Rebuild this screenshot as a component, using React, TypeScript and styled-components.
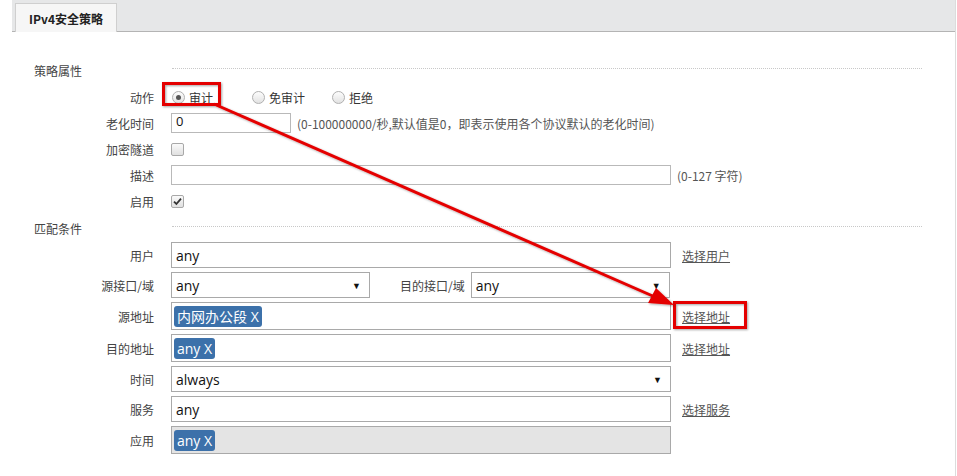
import React from 'react';
import styled, { createGlobalStyle } from 'styled-components';

const GlobalStyle = createGlobalStyle`
  html, body {
    margin: 0;
    padding: 0;
    background: #fff;
  }
  body {
    font-family: "Noto Sans CJK SC", "Liberation Sans", sans-serif;
    font-size: 12px;
    color: #333;
  }
`;

const Page = styled.div`
  position: relative;
  width: 957px;
  height: 476px;
  overflow: hidden;
  background: #fff;
  padding-left: 12px;
  box-sizing: border-box;
`;

const Panel = styled.div`
  width: 944px;
  height: 100%;
  border-right: 1px solid #dcdcdc;
  box-sizing: border-box;
`;

const TabBar = styled.div`
  height: 32px;
  background: #e6e7e8;
  border-bottom: 1px solid #b4b4b4;
  box-sizing: border-box;
  display: flex;
  align-items: flex-end;
  padding-left: 3px;
`;

const Tab = styled.div`
  width: 102px;
  height: 29px;
  margin-bottom: -1px;
  background: #f6f6f6;
  border: 1px solid #cfcfcf;
  border-bottom: none;
  box-sizing: border-box;
  display: flex;
  align-items: center;
  justify-content: center;
  font-weight: bold;
  font-size: 12px;
  color: #222;
`;

const Body = styled.div`
  padding-top: 28px;
`;

const SectionHead = styled.div<{ $gap: number }>`
  display: flex;
  align-items: center;
  height: 20px;
  margin-bottom: ${(p) => p.$gap}px;
  padding-left: 22px;
  span {
    width: 138px;
    color: #444;
  }
  &::after {
    content: '';
    width: 750px;
    border-top: 1px dotted #c8c8c8;
    margin-top: -4px;
  }
`;

const Rows = styled.div<{ $gap: number }>`
  display: flex;
  flex-direction: column;
  gap: ${(p) => p.$gap}px;
  margin-bottom: 4px;
`;

const Row = styled.div<{ $h?: number }>`
  display: flex;
  align-items: center;
  height: ${(p) => p.$h || 26}px;
`;

const Label = styled.div`
  width: 142px;
  margin-right: 17px;
  text-align: right;
  color: #444;
  flex-shrink: 0;
`;

const InlineLabel = styled.div`
  margin: 0 6px 0 30px;
  color: #444;
`;

const TextBox = styled.div<{ $w: number; $h?: number; $grey?: boolean }>`
  width: ${(p) => p.$w}px;
  height: ${(p) => p.$h || 26}px;
  border: 1px solid #a9a9a9;
  background: ${(p) => (p.$grey ? '#e4e4e4' : '#fff')};
  box-sizing: border-box;
  display: flex;
  align-items: center;
  padding: 0 4px;
  font-family: "Open Sans", "Liberation Sans", sans-serif;
  font-size: 14px;
  color: #111;
  flex-shrink: 0;
`;

const SmallBox = styled(TextBox)`
  border-color: #b9b9b9;
  font-size: 13px;
  padding-top: 0;
  align-items: flex-start;
  line-height: 14px;
`;

const SelectBox = styled(TextBox)`
  justify-content: space-between;
  padding-right: 8px;
  &::after {
    content: '▼';
    font-size: 9px;
    color: #111;
  }
`;

const Tag = styled.span`
  background: #3c71aa;
  color: #fff;
  border-radius: 3px;
  padding: 0 3px;
  height: 21px;
  line-height: 21px;
  margin-left: -2px;
  font-family: "Open Sans", "Noto Sans CJK SC", sans-serif;
  font-size: 14px;
`;

const Hint = styled.span`
  margin-left: 6px;
  color: #555;
`;

const Link = styled.a`
  margin-left: 11px;
  color: #555;
  text-decoration: underline;
  cursor: pointer;
`;

const RadioGroup = styled.div`
  display: flex;
  align-items: center;
  gap: 0;
`;

const RadioItem = styled.label`
  display: flex;
  align-items: center;
  width: 80px;
  color: #333;
`;

const RadioDot = styled.span<{ $on?: boolean }>`
  width: 11px;
  height: 11px;
  border-radius: 50%;
  border: 1px solid #b0b0b0;
  background: linear-gradient(#fdfdfd, #e2e2e2);
  margin: 0 4px 0 1px;
  display: flex;
  align-items: center;
  justify-content: center;
  &::after {
    content: '';
    display: ${(p) => (p.$on ? 'block' : 'none')};
    width: 5px;
    height: 5px;
    border-radius: 50%;
    background: #555;
  }
`;

const Check = styled.span`
  width: 13px;
  height: 13px;
  border: 1px solid #a8a8a8;
  border-radius: 2px;
  box-sizing: border-box;
  background: linear-gradient(#fafafa, #e0e0e0);
  display: flex;
  align-items: center;
  justify-content: center;
`;

const Overlay = styled.svg`
  position: absolute;
  left: 0;
  top: 0;
  pointer-events: none;
`;

const Annotation = () => (
  <Overlay width={957} height={476}>
    <defs>
      <filter id="sh" x="-20%" y="-20%" width="140%" height="140%">
        <feDropShadow dx="1" dy="1" stdDeviation="1.2" floodColor="#000" floodOpacity="0.35" />
      </filter>
    </defs>
    <g filter="url(#sh)" stroke="#e40000" fill="none" strokeWidth={3}>
      <rect x={163.5} y={83.5} width={56} height={21} />
      <rect x={674.5} y={302.5} width={71} height={25} />
      <line x1={214} y1={104} x2={655} y2={297} />
    </g>
    <polygon points="674,305 648,303 656,288" fill="#e40000" filter="url(#sh)" />
  </Overlay>
);

const App = () => (
  <>
    <GlobalStyle />
    <Page>
      <Panel>
        <TabBar>
          <Tab>IPv4安全策略</Tab>
        </TabBar>
        <Body>
          <SectionHead $gap={4}><span>策略属性</span></SectionHead>
          <Rows $gap={0}>
            <Row>
              <Label>动作</Label>
              <RadioGroup>
                <RadioItem><RadioDot $on />审计</RadioItem>
                <RadioItem><RadioDot />免审计</RadioItem>
                <RadioItem><RadioDot />拒绝</RadioItem>
              </RadioGroup>
            </Row>
            <Row>
              <Label>老化时间</Label>
              <SmallBox $w={120} $h={20}>0</SmallBox>
              <Hint>(0-100000000/秒,默认值是0，即表示使用各个协议默认的老化时间)</Hint>
            </Row>
            <Row>
              <Label>加密隧道</Label>
              <Check />
            </Row>
            <Row>
              <Label>描述</Label>
              <SmallBox $w={500} $h={20} />
              <Hint>(0-127 字符)</Hint>
            </Row>
            <Row>
              <Label>启用</Label>
              <Check>
                <svg width="9" height="9" viewBox="0 0 9 9">
                  <path d="M1 4.6 L3.4 7 L8 1.6" stroke="#333" strokeWidth="1.8" fill="none" />
                </svg>
              </Check>
            </Row>
          </Rows>
          <SectionHead $gap={4}><span>匹配条件</span></SectionHead>
          <Rows $gap={4}>
            <Row>
              <Label>用户</Label>
              <TextBox $w={500}>any</TextBox>
              <Link>选择用户</Link>
            </Row>
            <Row>
              <Label>源接口/域</Label>
              <SelectBox $w={199}>any</SelectBox>
              <InlineLabel>目的接口/域</InlineLabel>
              <SelectBox $w={199}>any</SelectBox>
            </Row>
            <Row $h={28}>
              <Label>源地址</Label>
              <TextBox $w={500} $h={28}><Tag>内网办公段 X</Tag></TextBox>
              <Link>选择地址</Link>
            </Row>
            <Row $h={28}>
              <Label>目的地址</Label>
              <TextBox $w={500} $h={28}><Tag>any X</Tag></TextBox>
              <Link>选择地址</Link>
            </Row>
            <Row>
              <Label>时间</Label>
              <SelectBox $w={500}>always</SelectBox>
            </Row>
            <Row>
              <Label>服务</Label>
              <TextBox $w={500}>any</TextBox>
              <Link>选择服务</Link>
            </Row>
            <Row $h={28}>
              <Label>应用</Label>
              <TextBox $w={500} $h={28} $grey><Tag>any X</Tag></TextBox>
            </Row>
          </Rows>
        </Body>
      </Panel>
      <Annotation />
    </Page>
  </>
);

export default App;
